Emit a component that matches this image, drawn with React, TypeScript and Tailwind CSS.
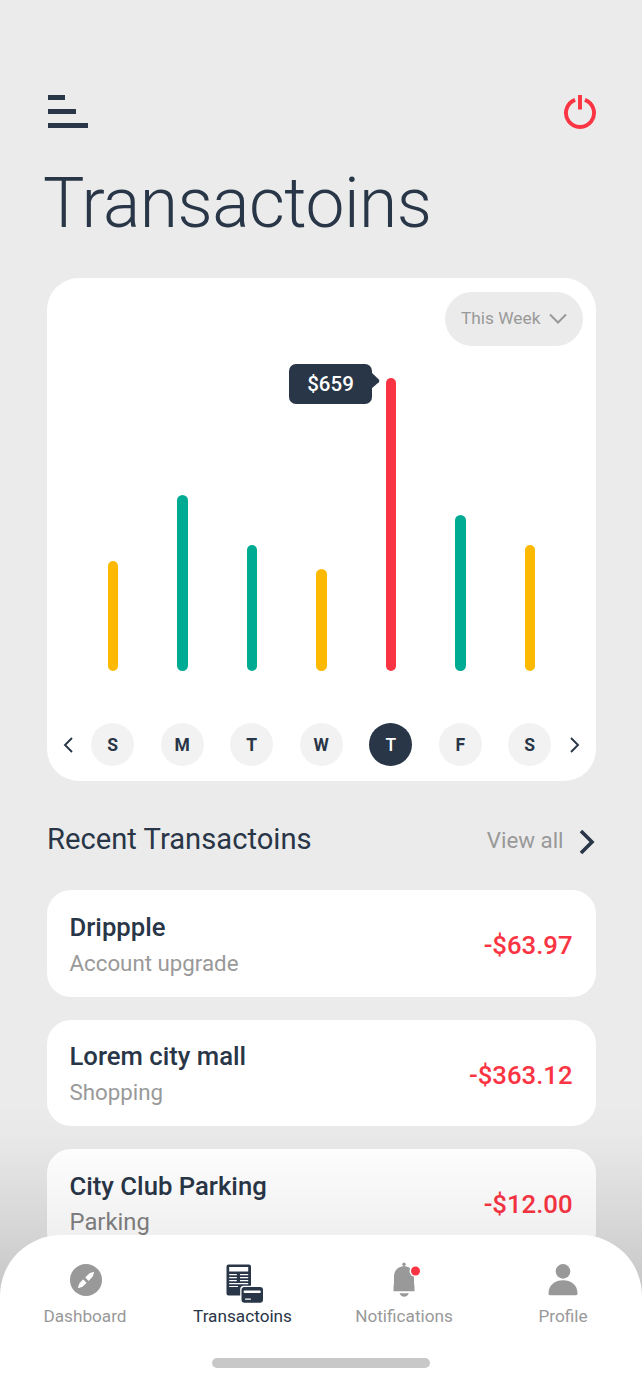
import React from "react";

const bars = [
  { day: "S", height: 110.5, color: "bg-[#fdb900]" },
  { day: "M", height: 176, color: "bg-[#00ab93]" },
  { day: "T", height: 126, color: "bg-[#00ab93]" },
  { day: "W", height: 102, color: "bg-[#fdb900]" },
  { day: "T", height: 293, color: "bg-[#fb3443]", label: "$659" },
  { day: "F", height: 156, color: "bg-[#00ab93]" },
  { day: "S", height: 126, color: "bg-[#fdb900]" },
];

const transactions = [
  { name: "Drippple", kind: "Account upgrade", amount: "-$63.97", kindStyle: "text-[22.3px] text-[#999]" },
  { name: "Lorem city mall", kind: "Shopping", amount: "-$363.12", kindStyle: "text-[22.3px] text-[#999]" },
  { name: "City Club Parking", kind: "Parking", amount: "-$12.00", kindStyle: "text-[23.8px] text-[#828282]" },
];

function PowerIcon() {
  return (
    <svg width="34" height="36" viewBox="0 0 34 36" fill="none" stroke="#fb3443" strokeWidth="3.9">
      <path d="M12.1 5.9A14 14 0 1 0 21.9 5.9" />
      <path d="M17 1V15.5" />
    </svg>
  );
}

function CompassIcon() {
  return (
    <svg width="32" height="32" viewBox="0 0 32 32">
      <circle cx="16" cy="16" r="16" fill="#999" />
      <g fill="#fff" stroke="#fff" strokeWidth="1.2" strokeLinejoin="round">
        <path d="M23.4 8.6L22.1 12.3L18.6 16L16 13.4L19.7 9.9Z" />
        <path d="M8.6 23.4L9.900 19.700L13.200 16.200L15.800 18.800L12.300 22.100Z" />
      </g>
    </svg>
  );
}

function ReceiptIcon() {
  return (
    <svg width="37" height="39" viewBox="0 0 37 39">
      <rect x="0.5" y="0.5" width="24.5" height="31" rx="2" fill="#293647" />
      <g fill="#fff">
        <rect x="3.200" y="3" width="19" height="4.500" />
        <path d="M3.200 10h7.600v1.300H3.200zM14 10h8.200v1.300H14zM3.200 13h7.600v1.300H3.200zM14 13h8.200v1.300H14zM3.200 16h7.600v1.300H3.200zM14 16h8.200v1.300H14zM3.200 19h19v1.300h-19zM3.200 22h8.800v1.100H3.200z" />
      </g>
      <rect x="14.200" y="21.700" width="24" height="19" rx="3.500" fill="#fff" />
      <rect x="15.500" y="23" width="21.500" height="15.800" rx="3" fill="#293647" />
      <rect x="17.600" y="26.500" width="17.200" height="2.600" rx="1" fill="#fff" />
      <rect x="19" y="34.500" width="6" height="1.300" rx=".6" fill="#fff" />
    </svg>
  );
}

function BellIcon() {
  return (
    <svg width="29" height="36" viewBox="0 0 29 36">
      <g fill="#999">
        <circle cx="12" cy="2.200" r="1.700" />
        <path d="M11.400 3h1.200v2h-1.200z" />
        <path d="M1.500 29.300V25L2 21V14.500C2 8.500 6 4.200 12 4.200S22 8.500 22 14.500V21L22.500 25V29.300Z" />
        <path d="M7.600 31.200H16.700C16 33.300 14.300 34.700 12.200 34.700S8.300 33.300 7.600 31.200Z" />
      </g>
      <circle cx="23.500" cy="9" r="6" fill="#fff" />
      <circle cx="23.500" cy="9" r="4.500" fill="#fb3443" />
    </svg>
  );
}

function PersonIcon() {
  return (
    <svg width="30" height="32" viewBox="0 0 30 32" fill="#999">
      <circle cx="15" cy="7.400" r="7.300" />
      <path d="M.5 29.500C.5 21 7 16.300 15 16.300S29.500 21 29.500 29.500Q29.500 31.200 28 31.200H2Q.5 31.200 .5 29.500Z" />
    </svg>
  );
}

const tabs = [
  { label: "Dashboard", Icon: CompassIcon, box: "w-[170px]", iconBox: "pl-[2px] pt-px", active: false },
  { label: "Transactoins", Icon: ReceiptIcon, box: "w-[145px]", iconBox: "pl-[4px] pt-px", active: true },
  { label: "Notifications", Icon: BellIcon, box: "w-[178px]", iconBox: "pl-[5px] -mt-px h-[41px]", active: false },
  { label: "Profile", Icon: PersonIcon, box: "w-[140px]", iconBox: "pt-px", active: false },
];

export default function App() {
  return (
    <div className="relative h-[1391px] w-[642px] overflow-hidden bg-[#ebebeb] font-['Roboto',sans-serif] text-[#293647]">
      <div className="absolute inset-x-0 bottom-0 h-[291px] bg-linear-to-b from-transparent via-black/4 via-46% to-black/15" />
      <main className="relative flex flex-col pt-[95px] pr-[46.500px] pl-[47px]">
        <header className="flex h-[34px] items-start justify-between pl-px">
          <div className="flex flex-col gap-[9.500px]">
            <span className="h-[4.500px] w-[16.500px] bg-[#293647]" />
            <span className="h-[4.500px] w-[28px] bg-[#293647]" />
            <span className="h-[4.500px] w-[39.500px] bg-[#293647]" />
          </div>
          <div className="-mt-px -mr-px">
            <PowerIcon />
          </div>
        </header>

        <h1 className="mt-[34px] -ml-[4px] h-[82px] text-[69.500px] leading-[82px] font-light tracking-[-0.5px] whitespace-nowrap">
          Transactoins
        </h1>

        <section className="mt-[32.500px] flex h-[503.500px] flex-col rounded-[32px] bg-white pt-[14.500px]">
          <button className="mr-[13px] flex h-[54px] w-[138px] items-center self-end rounded-full bg-[#ebebeb] pl-[16.500px] text-[17.300px] text-[#999]">
            <span className="w-[88px] text-left whitespace-nowrap">This Week</span>
            <svg width="18" height="12" viewBox="0 0 18 12" fill="none" stroke="#999" strokeWidth="2">
              <path d="M1 1.500L9 9.500L17 1.500" />
            </svg>
          </button>
          <div className="mx-auto grid h-[325px] w-[486.500px] grid-cols-7 items-end justify-items-center">
            {bars.map((bar, i) => (
              <div
                key={i}
                className={`relative w-[10.500px] rounded-full ${bar.color}`}
                style={{ height: bar.height }}
              >
                {bar.label && (
                  <div className="absolute -top-[14px] right-[24px] flex h-[40px] w-[83px] items-center justify-center rounded-[7px] bg-[#293647] text-[20.500px] font-medium text-white">
                    {bar.label}
                    <svg className="absolute top-[8px] -right-[8px]" width="9" height="18" viewBox="0 0 9 18" fill="#293647">
                      <path d="M0 0L7.800 7.400Q9 9 7.800 10.200L0 17Z" />
                    </svg>
                  </div>
                )}
              </div>
            ))}
          </div>
          <div className="mt-[52px] flex items-center justify-center gap-[5px]">
            <svg width="10" height="16" viewBox="0 0 10 16" fill="none" stroke="#293647" strokeWidth="1.900">
              <path d="M9 1L2 8L9 15" />
            </svg>
            <div className="grid w-[486.500px] grid-cols-7 justify-items-center">
              {bars.map((bar, i) => (
                <span
                  key={i}
                  className={`flex h-[43px] w-[43px] items-center justify-center rounded-full pt-px text-[17.500px] ${
                    bar.label ? "bg-[#293647] font-medium text-white" : "bg-[#f2f2f2] font-bold"
                  }`}
                >
                  {bar.day}
                </span>
              ))}
            </div>
            <svg width="10" height="16" viewBox="0 0 10 16" fill="none" stroke="#293647" strokeWidth="1.900">
              <path d="M1 1L8 8L1 15" />
            </svg>
          </div>
        </section>

        <div className="mt-[38px] flex h-[40px] items-center justify-between">
          <h2 className="text-[29.200px] leading-[40px] whitespace-nowrap">Recent Transactoins</h2>
          <div className="flex items-center gap-[16px] pt-[3px]">
            <span className="-mt-[2px] text-[22.300px] leading-[36px] whitespace-nowrap text-[#999]">View all</span>
            <svg width="17" height="26" viewBox="0 0 17 26" fill="none" stroke="#293647" strokeWidth="3.600" className="mt-[2px] -ml-px">
              <path d="M2 2L13 13L2 24" />
            </svg>
          </div>
        </div>

        <ul className="mt-[31px] flex flex-col gap-[23px]">
          {transactions.map((item) => (
            <li key={item.name} className="flex h-[106.500px] items-center justify-between rounded-[24px] bg-white pr-[23px] pl-[22.500px]">
              <div className="flex flex-col pt-[3px] whitespace-nowrap">
                <span className="text-[25.700px] leading-[36px] font-medium">{item.name}</span>
                <span className={`leading-[36px] ${item.kindStyle}`}>{item.kind}</span>
              </div>
              <span className="pt-[4px] text-[25.700px] leading-[32px] font-medium text-[#fb3443]">{item.amount}</span>
            </li>
          ))}
        </ul>
      </main>

      <div className="absolute inset-x-0 bottom-0 h-[256px] bg-linear-to-b from-transparent via-black/6 via-39% to-black/12" />

      <nav className="absolute inset-x-0 bottom-0 flex h-[156px] flex-col items-center rounded-t-[61px] bg-white">
        <div className="flex h-[123px] w-full pt-[28px]">
          {tabs.map(({ label, Icon, box, iconBox, active }) => (
            <a key={label} className={`flex flex-col items-center ${box}`}>
              <span className={`flex h-[40px] items-start ${iconBox}`}>
                <Icon />
              </span>
              <span className={`text-[17.200px] leading-[26px] whitespace-nowrap ${active ? "text-[#293647]" : "text-[#999]"}`}>
                {label}
              </span>
            </a>
          ))}
        </div>
        <div className="h-[10px] w-[218px] rounded-full bg-[#c8c8c8]" />
      </nav>
    </div>
  );
}
